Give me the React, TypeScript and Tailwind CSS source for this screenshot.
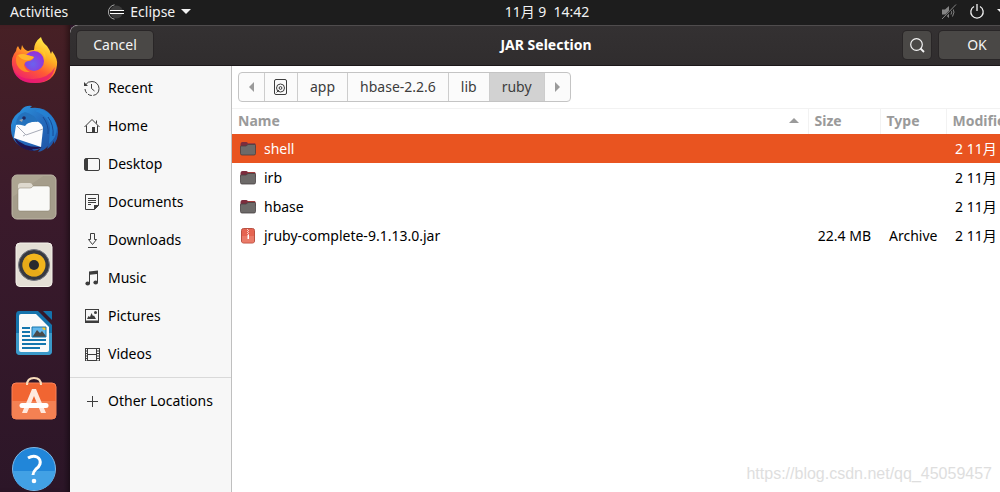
import { useState } from "react";
import { clsx } from "clsx";

type IconProps = { className?: string };

const places = [
  { label: "Recent", Icon: RecentIcon },
  { label: "Home", Icon: HomeIcon },
  { label: "Desktop", Icon: DesktopIcon },
  { label: "Documents", Icon: DocumentsIcon },
  { label: "Downloads", Icon: DownloadsIcon },
  { label: "Music", Icon: MusicIcon },
  { label: "Pictures", Icon: PicturesIcon },
  { label: "Videos", Icon: VideosIcon },
];

const crumbs = ["app", "hbase-2.2.6", "lib", "ruby"];

const files = [
  { name: "shell", folder: true, size: "", type: "", modified: "2 11月" },
  { name: "irb", folder: true, size: "", type: "", modified: "2 11月" },
  { name: "hbase", folder: true, size: "", type: "", modified: "2 11月" },
  {
    name: "jruby-complete-9.1.13.0.jar",
    folder: false,
    size: "22.4 MB",
    type: "Archive",
    modified: "2 11月",
  },
];

const dockApps = [
  { name: "Firefox", Icon: FirefoxIcon },
  { name: "Thunderbird", Icon: ThunderbirdIcon },
  { name: "Files", Icon: FilesIcon },
  { name: "Rhythmbox", Icon: RhythmboxIcon },
  { name: "Writer", Icon: WriterIcon },
  { name: "Software", Icon: SoftwareIcon },
  { name: "Help", Icon: HelpIcon },
];

export default function App() {
  return (
    <div className="relative flex h-screen flex-col overflow-hidden bg-[#2c1628] font-['Noto_Sans','Noto_Sans_CJK_SC',sans-serif] text-sm leading-5 text-black">
      <TopBar />
      <div className="flex min-h-0 flex-1">
        <Dock />
        {/* The dialog runs past the right edge of the screen */}
        <section
          aria-label="JAR Selection"
          className="-mr-[22px] flex min-w-0 flex-1 flex-col overflow-hidden rounded-tl-lg bg-white"
        >
          <DialogHeader />
          <div className="flex min-h-0 flex-1">
            <Sidebar />
            <main className="min-w-0 flex-1">
              <PathBar />
              <FileTable />
            </main>
          </div>
        </section>
      </div>
      <p className="pointer-events-none absolute right-2 bottom-2 font-['Liberation_Sans',sans-serif] text-base leading-5 text-[#dedede]">
        https://blog.csdn.net/qq_45059457
      </p>
    </div>
  );
}

function TopBar() {
  return (
    <header className="grid h-[25px] shrink-0 grid-cols-[1fr_auto_1fr] items-center bg-[#1d1d1d] pb-0.5 pl-[94px] text-[#f2f2f2]">
      <div className="-ml-[84px] flex items-center">
        <button type="button">Activities</button>
        <button type="button" className="ml-10 flex items-center gap-1.5">
          <EclipseIcon className="size-4" />
          Eclipse
          <svg viewBox="0 0 10 5" className="h-[5px] w-2.5" fill="currentColor">
            <path d="M0 0h10L5 5z" />
          </svg>
        </button>
      </div>
      <button type="button" className="whitespace-pre">
        11月 9  14:42
      </button>
      <div className="flex items-center justify-end gap-3">
        <MutedIcon className="size-4" />
        <PowerIcon className="size-4" />
        <svg viewBox="0 0 3 5" className="h-[5px] w-[3px]" fill="currentColor">
          <path d="M0 0h3v3z" />
        </svg>
      </div>
    </header>
  );
}

function Dock() {
  return (
    <nav
      aria-label="Dock"
      className="flex w-[70px] shrink-0 flex-col gap-5 bg-linear-to-b from-[#472025] via-[#3a1a2b] via-40% to-[#2c1628] pt-[11px] pl-2.5 shadow-[inset_-6px_0_6px_-4px_rgba(0,0,0,0.5)]"
    >
      {dockApps.map(({ name, Icon }) => (
        <button key={name} type="button" aria-label={name} className="size-12 shrink-0">
          <Icon className="size-12" />
        </button>
      ))}
    </nav>
  );
}

function DialogHeader() {
  return (
    <div className="grid h-[41px] shrink-0 grid-cols-[1fr_auto_1fr] items-center rounded-tl-lg border-t border-b border-t-[#4f4c4d] border-b-[#1c181a] bg-linear-to-b from-[#343132] to-[#302d2e] px-[7px] pb-0.5 text-white">
      <HeaderButton className="w-[76px]">Cancel</HeaderButton>
      <h1 className="font-bold">JAR Selection</h1>
      <div className="flex justify-end gap-2">
        <HeaderButton className="w-[28px]" label="Search">
          <SearchIcon className="size-4" />
        </HeaderButton>
        <HeaderButton className="w-[76px]">OK</HeaderButton>
      </div>
    </div>
  );
}

function HeaderButton({
  className,
  label,
  children,
}: {
  className?: string;
  label?: string;
  children: React.ReactNode;
}) {
  return (
    <button
      type="button"
      aria-label={label}
      className={clsx(
        "flex h-[28px] items-center justify-center rounded bg-[#4a4846] text-[#f4f4f4] shadow-[0_0_0_1px_#292627]",
        className,
      )}
    >
      {children}
    </button>
  );
}

function Sidebar() {
  return (
    <aside className="w-[162px] shrink-0 border-r border-[#bfbfbf] bg-[#f7f7f7] pt-[3px]">
      {places.map(({ label, Icon }) => (
        <SidebarItem key={label} label={label} icon={<Icon className="size-4" />} />
      ))}
      <hr className="mt-1 mb-1 border-[#d9d9d9]" />
      <SidebarItem label="Other Locations" icon={<PlusIcon className="size-4" />} />
    </aside>
  );
}

function SidebarItem({ label, icon }: { label: string; icon: React.ReactNode }) {
  return (
    <button
      type="button"
      className="flex h-[38px] w-full items-center gap-2 pl-3.5 whitespace-nowrap"
    >
      <span className="text-[#3d3d3d]">{icon}</span>
      {label}
    </button>
  );
}

function PathBar() {
  const [current, setCurrent] = useState("ruby");

  return (
    <div className="flex border-b border-[#f2f2f2] px-1.5 pt-1.5 pb-1.5">
      <div className="flex h-[30px] divide-x divide-[#cdcdcd] overflow-hidden rounded border border-[#c4c4c4] bg-[#fbfbfb] text-[#3d3d3d]">
        <button type="button" aria-label="Back" className="flex w-[26px] items-center justify-center">
          <svg viewBox="0 0 5 10" className="h-2.5 w-[5px]" fill="#9a9a9a">
            <path d="M5 0v10L0 5z" />
          </svg>
        </button>
        <button type="button" aria-label="File system" className="flex w-[33px] items-center justify-center">
          <DiskIcon className="size-4" />
        </button>
        {crumbs.map((crumb) => (
          <button
            key={crumb}
            type="button"
            onClick={() => setCurrent(crumb)}
            className={clsx("px-3", crumb === current && "bg-[#d2d2d2]")}
          >
            {crumb}
          </button>
        ))}
        <button type="button" aria-label="Forward" className="flex w-[25px] items-center justify-center">
          <svg viewBox="0 0 5 10" className="h-2.5 w-[5px]" fill="#9a9a9a">
            <path d="M0 0v10l5-5z" />
          </svg>
        </button>
      </div>
    </div>
  );
}

function FileTable() {
  const [selected, setSelected] = useState("shell");

  return (
    <table className="w-full table-fixed text-left whitespace-nowrap">
      <colgroup>
        <col />
        <col className="w-[72px]" />
        <col className="w-[66px]" />
        <col className="w-[76px]" />
      </colgroup>
      <thead>
        <tr className="h-[25px] text-[#9a9a9a]">
          <th className="border-r border-[#f2f2f2] px-1.5 pb-0.5 font-bold">
            <span className="flex items-center justify-between pr-[3px]">
              Name
              <svg viewBox="0 0 10 5" className="h-[5px] w-2.5" fill="currentColor">
                <path d="M0 5h10L5 0z" />
              </svg>
            </span>
          </th>
          <th className="border-r border-[#f2f2f2] px-1.5 pb-0.5 font-bold">Size</th>
          <th className="border-r border-[#f2f2f2] px-1.5 pb-0.5 font-bold">Type</th>
          <th className="px-1.5 pb-0.5 font-bold">Modified</th>
        </tr>
      </thead>
      <tbody>
        {files.map((file) => (
          <tr
            key={file.name}
            onClick={() => setSelected(file.name)}
            className={clsx("h-[29px]", file.name === selected && "bg-[#e95420] text-white")}
          >
            <td className="px-2">
              <span className="flex items-center gap-2">
                {file.folder ? <FolderIcon className="size-4" /> : <ArchiveIcon className="size-4" />}
                {file.name}
              </span>
            </td>
            <td className="px-[9px] text-right">{file.size}</td>
            <td className="px-[9px]">{file.type}</td>
            <td className="px-[9px]">{file.modified}</td>
          </tr>
        ))}
      </tbody>
    </table>
  );
}

/* Symbolic icons */

function RecentIcon({ className }: IconProps) {
  return (
    <svg viewBox="0 0 16 16" className={className} fill="none" stroke="currentColor">
      <path d="M1.600 4.800A7 7 0 0 1 8 1.500a7 7 0 0 1 0 14 7 7 0 0 1-7-6.500" strokeDasharray="28 1.500 4 1.500 20" />
      <path d="M7.500 4v4.500l3 2.500" />
      <path d="M0 2v4h4z" fill="currentColor" stroke="none" />
    </svg>
  );
}

function HomeIcon({ className }: IconProps) {
  return (
    <svg viewBox="0 0 16 16" className={className} fill="none" stroke="currentColor">
      <path d="M.5 9 8 1.500 15.500 9M2.500 7.500v7h11v-7M12.500 5.500v-3" />
      <path d="M8 9h3v6H8z" fill="currentColor" stroke="none" />
    </svg>
  );
}

function DesktopIcon({ className }: IconProps) {
  return (
    <svg viewBox="0 0 16 16" className={className} fill="none" stroke="currentColor">
      <rect x=".5" y="2.500" width="15" height="12" rx="1.500" />
      <path d="M1 3h3v11H1z" fill="currentColor" stroke="none" />
    </svg>
  );
}

function DocumentsIcon({ className }: IconProps) {
  return (
    <svg viewBox="0 0 16 16" className={className} fill="none" stroke="currentColor">
      <path d="M1.500.500h13v11l-4 4h-9z" />
      <path d="M4 4.500h8M4 6.500h8M4 8.500h8M4 10.500h3" />
      <path d="M10 11h5l-5 5z" fill="currentColor" stroke="none" />
    </svg>
  );
}

function DownloadsIcon({ className }: IconProps) {
  return (
    <svg viewBox="0 0 16 16" className={className} fill="none" stroke="currentColor">
      <path d="M6.500 1.500h4v6h2l-4 5-4-5h2zM4 15.500h9" />
    </svg>
  );
}

function MusicIcon({ className }: IconProps) {
  return (
    <svg viewBox="0 0 16 16" className={className} fill="currentColor">
      <path d="M5 1.500 14 .5v12h-1V4L6 4.800V14H5z" />
      <ellipse cx="3.700" cy="13.500" rx="2.300" ry="1.900" />
      <ellipse cx="11.700" cy="12.500" rx="2.300" ry="1.900" />
    </svg>
  );
}

function PicturesIcon({ className }: IconProps) {
  return (
    <svg viewBox="0 0 16 16" className={className} fill="currentColor">
      <path fillRule="evenodd" d="M1 1h14v14H1zM2 2v10.500h12V2z" />
      <path d="M3 11l1.500-3L6 9l1.500-4L9 8l1 -.5L12 11z" />
      <circle cx="11.500" cy="4.500" r="1.500" />
    </svg>
  );
}

function VideosIcon({ className }: IconProps) {
  return (
    <svg viewBox="0 0 16 16" className={className} fill="none" stroke="currentColor">
      <path d="M3.500 2v13M12.500 2v13M3 2.500h10M3 8.500h10M3 14.500h10M1.500 2v13M15.500 2v13" />
      <path d="M2.500 2v13M14 2v13" strokeWidth="2" strokeDasharray="1 1.500" />
    </svg>
  );
}

function PlusIcon({ className }: IconProps) {
  return (
    <svg viewBox="0 0 16 16" className={className} fill="none" stroke="currentColor">
      <path d="M8.500 3v11M3 8.500h11" />
    </svg>
  );
}

function DiskIcon({ className }: IconProps) {
  return (
    <svg viewBox="0 0 16 16" className={className} fill="none" stroke="currentColor">
      <rect x="1.500" y=".5" width="12" height="15" rx="1.500" />
      <circle cx="7.500" cy="9" r="4" />
      <circle cx="7.500" cy="9" r="1.400" />
      <path d="M3.500 13.500 6 11" />
    </svg>
  );
}

function SearchIcon({ className }: IconProps) {
  return (
    <svg viewBox="0 0 16 16" className={className} fill="none" stroke="currentColor">
      <circle cx="7.500" cy="7.500" r="5.800" strokeWidth="1.200" />
      <path d="m11.500 11.500 3.500 3.500" strokeWidth="1.800" />
    </svg>
  );
}

function PowerIcon({ className }: IconProps) {
  return (
    <svg viewBox="0 0 16 16" className={className} fill="none" stroke="currentColor" strokeWidth="1.300">
      <path d="M5 2.500a6.200 6.200 0 1 0 6 0M8 0v7" />
    </svg>
  );
}

function MutedIcon({ className }: IconProps) {
  return (
    <svg viewBox="0 0 16 16" className={className} fill="none" stroke="#858585">
      <path d="M1 5.500h3L8 2v12l-4-3.500H1z" fill="#858585" stroke="none" />
      <path d="M10 6q1.500 2 0 4.500M11.500 4q3 4 0 8.500" />
      <path d="M15 1 1.500 15" stroke="#1d1d1d" strokeWidth="2" />
      <path d="M15 .5 1 15" />
    </svg>
  );
}

function EclipseIcon({ className }: IconProps) {
  return (
    <svg viewBox="0 0 16 16" className={className} fill="none">
      <circle cx="8.500" cy="8" r="6.500" fill="#3c3c3c" />
      <path d="M6.500.8A7.300 7.300 0 0 0 6.500 15.200" stroke="#a8a8a8" />
      <path d="M3 8h12" stroke="#151515" strokeWidth="1.500" />
      <path d="M2 6.500h14M2 9.500h14" stroke="#fff" />
    </svg>
  );
}

/* File icons */

function FolderIcon({ className }: IconProps) {
  return (
    <svg viewBox="0 0 16 16" className={className}>
      <path d="M.5 3q0-2 2-2h4l1.500 1H14q1.500 0 1.500 1.500V7H.5z" fill="#7c2c3d" />
      <path d="M8 2h6q1.500 0 1.500 1.500H7z" fill="#a33a3a" />
      <path d="M.5 5.500Q.5 5 1 5h5l2-1.500h6.500q1 0 1 1v8q0 1.500-1.500 1.500H2Q.5 14 .5 12.500z" fill="#6d6a69" stroke="#474041" strokeWidth=".8" />
    </svg>
  );
}

function ArchiveIcon({ className }: IconProps) {
  return (
    <svg viewBox="0 0 16 16" className={className}>
      <rect x="1.500" y=".5" width="13" height="14.500" rx="2" fill="#e56451" stroke="#b95142" />
      <path d="M2 8h12v6q0 .5-1 .5H3q-1 0-1-.5z" fill="#ea7b69" />
      <path d="M7.500 1v6M8.500 2v6" stroke="#f9cfc7" strokeDasharray="1 1" />
      <path d="M7.500 7h1.500v4H7.500z" fill="#fff" />
    </svg>
  );
}

/* Dock icons, on a 48px grid */

function FirefoxIcon({ className }: IconProps) {
  return (
    <svg viewBox="0 0 48 48" className={className}>
      <defs>
        <linearGradient id="fx-body" x1=".85" y1=".1" x2=".35" y2="1">
          <stop offset="0" stopColor="#fff04a" />
          <stop offset=".35" stopColor="#ffae23" />
          <stop offset=".65" stopColor="#ff5a35" />
          <stop offset="1" stopColor="#f0246a" />
        </linearGradient>
        <radialGradient id="fx-globe" cx=".45" cy=".65" r=".7">
          <stop offset="0" stopColor="#6a63ee" />
          <stop offset="1" stopColor="#9a2bd6" />
        </radialGradient>
      </defs>
      <path
        d="M8 10q1 3 3 4l1-5q2 5 6 6 3-1 6-1 0-8 7-13 1 5 6 9 3 4 4 8l1-3q6 8 5 14-2 18-22 18T2 29q-1-8 4-14 0-3 2-5z"
        fill="url(#fx-body)"
      />
      <path d="M3 34q7 10 21 9 15-1 21-12-3 16-21 16Q8 47 3 34z" fill="#e3127a" opacity=".65" />
      <circle cx="24" cy="25" r="10" fill="url(#fx-globe)" />
      <path d="M24 15q4-2 8 1 3 3 3 8 2-8-3-11-4-2-8 2z" fill="#ffc72c" />
      <path d="M7 19q5-2 10 0 4 1 7 2-1 3-5 4-4 0-5 4 1 5 6 7-9 1-13-7-2-5 0-10z" fill="#ff8a24" />
      <path d="M8 19q5-2 9 0 4 1 7 2-1 2-5 3-8 1-11-5z" fill="#ffb52c" />
    </svg>
  );
}

function ThunderbirdIcon({ className }: IconProps) {
  return (
    <svg viewBox="0 0 48 48" className={className}>
      <defs>
        <linearGradient id="tb-body" x1="0" y1="0" x2="1" y2="1">
          <stop offset="0" stopColor="#2d9ae4" />
          <stop offset=".5" stopColor="#246bbd" />
          <stop offset="1" stopColor="#1d4f9f" />
        </linearGradient>
      </defs>
      <path
        d="M1 26Q0 15 8 9q2-1 4-4 4-4 10-3l-2 2q14-2 21 7 7 8 7 17 0 7-4 12l0-3q-3 6-7 8l1-3q-4 5-10 6l3-4q-5 4-12 2Q2 41 1 26z"
        fill="url(#tb-body)"
      />
      <path d="M25 7q15 6 15 17l-1 16q8-7 8-16Q44 9 30 5z" fill="#2584d5" opacity=".75" />
      <path d="M33 13q6 8 5 17M38 13q6 8 5 19" fill="none" stroke="#174994" />
      <path d="M4 33q9 11 28 10-5 3-10 2l2 2Q8 46 4 33z" fill="#201551" />
      <path d="m6 21 21-4q6 3 6 8l-2 18L4 34z" fill="#fcfcfd" />
      <path d="m7 22 9 9 17-6M15 31l-2 1" fill="none" stroke="#a7abb7" />
      <path d="M6 20q1-10 9-12 9 2 13 10-9-1-13 4-3-1-9-2z" fill="#2472bd" />
      <circle cx="14" cy="14" r="1.800" fill="#20295f" />
      <path d="m9 16 4-1-1 3z" fill="#a2a4ad" />
    </svg>
  );
}

function FilesIcon({ className }: IconProps) {
  return (
    <svg viewBox="0 0 48 48" className={className}>
      <rect x="2" y="3" width="44" height="44" rx="5" fill="#a59d8b" stroke="#beb7a7" />
      <path d="M2.500 25 34 3.500H7Q2.500 3.500 2.500 8z" fill="#b0a896" opacity=".7" />
      <path d="M8 14q0-3 3-3h9q2 0 3 3l1 3H8z" fill="#ded9ce" />
      <path d="M8 18q0-2 2-2h10q2 0 3-2h15q2 0 2 2v21q0 2-2 2H10q-2 0-2-2z" fill="#f9f9f7" stroke="#857d6b" strokeWidth=".5" />
    </svg>
  );
}

function RhythmboxIcon({ className }: IconProps) {
  return (
    <svg viewBox="0 0 48 48" className={className}>
      <rect x="6" y="3" width="36" height="43.500" rx="4" fill="#e4dfd5" stroke="#f5f2eb" />
      <circle cx="24" cy="25" r="15.500" fill="#373940" stroke="#777982" />
      <circle cx="24" cy="25" r="11.500" fill="#f1b51d" />
      <path d="m16 17 16 17q-5 4-11 2-8-3-9-10 0-5 4-9z" fill="#dc9d13" opacity=".4" />
      <circle cx="24" cy="25" r="5" fill="#292a2e" />
    </svg>
  );
}

function WriterIcon({ className }: IconProps) {
  return (
    <svg viewBox="0 0 48 48" className={className}>
      <path d="M9 3h19l14 14v26q0 4-4 4H10q-4 0-4-4V7q0-4 3-4z" fill="#1573ac" />
      <path d="M6 25h36v18q0 4-4 4H10q-4 0-4-4z" fill="#3b99c9" />
      <path d="M11 6h15l13 13v23q0 2-2 2H11q-2 0-2-2V8q0-2 2-2z" fill="#fafafa" />
      <path d="M33 3h8q1 0 1 1v8z" fill="#1573ac" />
      <path d="M12 20h8M12 24h8M12 28h8M12 32h24M12 36h24M12 40h18" stroke="#1476ae" strokeWidth="2" />
      <path d="M22 19h14v10H22z" fill="#63b8ec" />
      <path d="m23 28 4-6 3 3 2-2 4 5v1H23z" fill="#4a4a4a" />
      <path d="M32 19h4v3h-2q-2-1-2-3z" fill="#f9c526" />
      <path d="M22 19h14v10H22z" fill="none" stroke="#1476ae" />
    </svg>
  );
}

function SoftwareIcon({ className }: IconProps) {
  return (
    <svg viewBox="0 0 48 48" className={className}>
      <rect x="2" y="7" width="44" height="36" rx="4" fill="#f16532" stroke="#fb8258" />
      <path d="M2 25h44v14q0 4-4 4H6q-4 0-4-4z" fill="#f48153" />
      <path d="M17 9q0-7 7-7t7 7" fill="none" stroke="#f8ddbb" strokeWidth="2" />
      <path d="M22 13h4l10 24h-5L24 20l-7 17h-5z" fill="#ffe9df" />
      <path d="M12 29.500h24" stroke="#fff" strokeWidth="5" strokeLinecap="round" />
    </svg>
  );
}

function HelpIcon({ className }: IconProps) {
  return (
    <svg viewBox="0 0 48 48" className={className}>
      <circle cx="24" cy="25" r="21.500" fill="#2186d9" stroke="#7bb9e9" />
      <path d="M3 27h42Q43 46 24 46T3 27z" fill="#42a1e5" />
      <path d="M18 14q5-3 9-1 4 2 3 7-1 3-4 5-3 3-3 6" fill="none" stroke="#fff" strokeWidth="3" />
      <circle cx="24" cy="37" r="2.300" fill="#fff" />
    </svg>
  );
}
